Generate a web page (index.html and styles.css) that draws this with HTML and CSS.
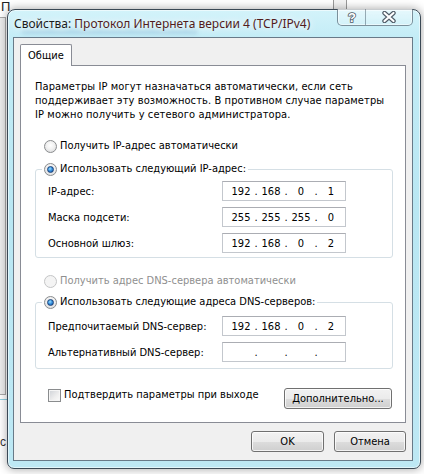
FILE: index.html
```html
<!DOCTYPE html>
<html lang="ru">
<head>
<meta charset="utf-8">
<title>Свойства: Протокол Интернета версии 4 (TCP/IPv4)</title>
<link rel="stylesheet" href="styles.css">
</head>
<body>
<div class="desktop">
  <!-- bits of the window lying underneath -->
  <span class="under-letter">П</span>
  <span class="under-scroll"></span>
  <span class="under-edge"></span>
  <span class="under-line"></span>
  <span class="under-letter2">с</span>

  <div class="dialog">
    <span class="glass-blur"></span>
    <div class="titlebar">
      <span class="title"><span class="title-a">Свойства:</span> <span class="title-b">Протокол Интернета версии 4 (TCP/IPv4)</span></span>
      <div class="caption">
        <span class="cap-btn cap-help">
          <svg width="14" height="14" viewBox="0 0 14 14"><text x="7" y="12" text-anchor="middle" class="cap-q">?</text></svg>
        </span>
        <span class="cap-btn cap-close">
          <svg width="14" height="12" viewBox="0 0 14 12">
            <path d="M2.5 2 L11.5 10 M11.5 2 L2.5 10" class="x-out"/>
            <path d="M2.5 2 L11.5 10 M11.5 2 L2.5 10" class="x-in"/>
          </svg>
        </span>
      </div>
    </div>

    <div class="client">
      <div class="tabs"><div class="tab">Общие</div></div>
      <div class="page">
        <p class="intro">Параметры IP могут назначаться автоматически, если сеть<br>поддерживает эту возможность. В противном случае параметры<br>IP можно получить у сетевого администратора.</p>

        <div class="radio r-ip-auto"><span class="rb"></span><span>Получить IP-адрес автоматически</span></div>

        <fieldset class="group g-ip">
          <legend><span class="radio on"><span class="rb"></span><span>Использовать следующий IP-адрес:</span></span></legend>
          <div class="rows">
            <span class="lbl">IP-адрес:</span>
            <div class="ipfield"><span class="oct">192</span><span class="dot">.</span><span class="oct">168</span><span class="dot">.</span><span class="oct">0</span><span class="dot">.</span><span class="oct">1</span></div>
            <span class="lbl">Маска подсети:</span>
            <div class="ipfield"><span class="oct">255</span><span class="dot">.</span><span class="oct">255</span><span class="dot">.</span><span class="oct">255</span><span class="dot">.</span><span class="oct">0</span></div>
            <span class="lbl">Основной шлюз:</span>
            <div class="ipfield"><span class="oct">192</span><span class="dot">.</span><span class="oct">168</span><span class="dot">.</span><span class="oct">0</span><span class="dot">.</span><span class="oct">2</span></div>
          </div>
        </fieldset>

        <div class="radio off r-dns-auto"><span class="rb"></span><span>Получить адрес DNS-сервера автоматически</span></div>

        <fieldset class="group g-dns">
          <legend><span class="radio on"><span class="rb"></span><span>Использовать следующие адреса DNS-серверов:</span></span></legend>
          <div class="rows">
            <span class="lbl">Предпочитаемый DNS-сервер:</span>
            <div class="ipfield"><span class="oct">192</span><span class="dot">.</span><span class="oct">168</span><span class="dot">.</span><span class="oct">0</span><span class="dot">.</span><span class="oct">2</span></div>
            <span class="lbl">Альтернативный DNS-сервер:</span>
            <div class="ipfield"><span class="oct"></span><span class="dot">.</span><span class="oct"></span><span class="dot">.</span><span class="oct"></span><span class="dot">.</span><span class="oct"></span></div>
          </div>
        </fieldset>

        <div class="page-bottom">
          <div class="check"><span class="cbox"></span><span>Подтвердить параметры при выходе</span></div>
          <button class="btn btn-adv">Дополнительно...</button>
        </div>
      </div>

      <div class="footer">
        <button class="btn btn-ok">OK</button>
        <button class="btn btn-cancel">Отмена</button>
      </div>
    </div>
  </div>
</div>
</body>
</html>
```
FILE: styles.css
```css
html, body {
  margin: 0;
  padding: 0;
}

body {
  width: 424px;
  height: 474px;
  overflow: hidden;
  background: #ffffff;
  font-family: "DejaVu Sans Condensed", "DejaVu Sans", sans-serif;
  font-size: 11px;
  color: #000;
}

.desktop {
  position: relative;
  width: 424px;
  height: 474px;
}

/* ---- window underneath ---- */
.under-letter {
  position: absolute;
  left: 1px;
  top: -1px;
  font-family: "Liberation Sans", sans-serif;
  font-size: 13px;
  color: #222;
}
.under-letter2 {
  position: absolute;
  left: 0;
  top: 435px;
  font-family: "Liberation Sans", sans-serif;
  font-size: 12px;
  color: #333;
}
.under-scroll {
  position: absolute;
  left: 333px;
  top: 0;
  width: 12px;
  height: 10px;
  border-left: 1px solid #9a9a9a;
  border-right: 1px solid #9a9a9a;
  background: #f4f4f4;
}
.under-edge {
  position: absolute;
  left: 0;
  top: 17px;
  width: 5px;
  height: 376px;
  border: 1px solid #a9a9a9;
  border-left: none;
  background: #ededed;
}
.under-line {
  position: absolute;
  left: 0;
  top: 399px;
  width: 8px;
  height: 1px;
  background: #8fd0e2;
}

/* ---- dialog frame ---- */
.dialog {
  position: absolute;
  left: 7px;
  top: 9px;
  width: 414px;
  height: 460px;
  box-sizing: border-box;
  border: 1px solid #3b4955;
  border-radius: 8px 8px 7px 7px;
  background: linear-gradient(to bottom, #d3f3fa 0px, #c2ecf6 30px, #b9e7f3 200px, #bde8f4 100%);
  box-shadow: 0 0 8px 1px rgba(0, 0, 0, 0.3), inset 0 0 0 1px rgba(255, 255, 255, 0.55);
  padding: 0 7px 7px 5px;
  display: flex;
  flex-direction: column;
}

.glass-blur {
  position: absolute;
  left: 14px;
  top: 20px;
  width: 175px;
  height: 4px;
  background: rgba(70, 120, 175, 0.22);
  filter: blur(2px);
}

.titlebar {
  height: 27px;
  display: flex;
  align-items: flex-start;
  position: relative;
}

.title {
  flex: 1;
  line-height: 27px;
  padding-left: 1px;
  font-family: "Noto Sans", sans-serif;
  font-size: 12px;
  white-space: nowrap;
  text-shadow: 0 0 6px rgba(255, 255, 255, 0.95), 0 0 10px rgba(255, 255, 255, 0.8);
}
.title-a { color: #1c1c1c; }
.title-b { color: #521c1c; }

.caption {
  display: flex;
  margin-top: -1px;
  height: 17px;
  border: 1px solid rgba(55, 75, 90, 0.6);
  border-top: none;
  border-radius: 0 0 5px 5px;
  box-sizing: border-box;
  background: linear-gradient(to bottom, rgba(255, 255, 255, 0.45), rgba(255, 255, 255, 0.15));
  box-shadow: inset 0 0 0 1px rgba(255, 255, 255, 0.5);
  overflow: hidden;
}
.cap-btn {
  display: flex;
  align-items: center;
  justify-content: center;
  height: 16px;
}
.cap-help {
  width: 27px;
  border-right: 1px solid rgba(55, 75, 90, 0.45);
}
.cap-close {
  width: 46px;
}
.cap-q {
  font-family: "Liberation Sans", sans-serif;
  font-weight: bold;
  font-size: 13px;
  fill: #ffffff;
  stroke: #4f5b66;
  stroke-width: 1.6px;
  paint-order: stroke fill;
}
.x-out {
  stroke: #4f5b66;
  stroke-width: 4.4;
  stroke-linecap: round;
  fill: none;
}
.x-in {
  stroke: #ffffff;
  stroke-width: 2.2;
  stroke-linecap: round;
  fill: none;
}

/* ---- client area ---- */
.client {
  flex: 1;
  display: flex;
  flex-direction: column;
  border: 1px solid #687a88;
  background: #f0f0f0;
  padding: 6px 6px 8px 6px;
  min-height: 0;
}

.tabs {
  display: flex;
  position: relative;
  z-index: 1;
  margin-bottom: -1px;
}
.tab {
  width: 52px;
  height: 22px;
  box-sizing: border-box;
  border: 1px solid #898c95;
  border-bottom: none;
  border-radius: 2px 2px 0 0;
  background: #ffffff;
  line-height: 21px;
  padding-left: 7px;
}

.page {
  flex: 1;
  display: flex;
  flex-direction: column;
  border: 1px solid #898c95;
  background: #ffffff;
  padding: 14px 12px 13px 14px;
}

.intro {
  margin: 0;
  line-height: 14px;
  white-space: nowrap;
  letter-spacing: 0.1px;
}

/* radio buttons */
.radio {
  display: flex;
  align-items: center;
  height: 14px;
  line-height: 14px;
  gap: 3px;
  white-space: nowrap;
}
.r-ip-auto { margin: 17px 0 0 9px; }
.r-dns-auto { margin: 16px 0 0 9px; }

.rb {
  position: relative;
  flex: none;
  width: 13px;
  height: 13px;
  box-sizing: border-box;
  border-radius: 50%;
  border: 1px solid #8a8c8e;
  background: radial-gradient(circle at 50% 40%, #ffffff 0%, #f1f1f1 45%, #d2d3d5 100%);
}
.radio.on .rb::after {
  content: "";
  position: absolute;
  left: 2px;
  top: 2px;
  width: 7px;
  height: 7px;
  box-sizing: border-box;
  border-radius: 50%;
  border: 1px solid #1b4279;
  background: radial-gradient(circle at 40% 35%, #9be0ff 0%, #3a93e0 45%, #0f4c9c 100%);
}
.radio.off { color: #8f8f8f; }
.radio.off .rb {
  border-color: #c4c5c6;
  background: #f4f4f4;
}

/* group boxes */
.group {
  margin: 9px 0 0 0;
  padding: 0;
  border: 1px solid #d5dfe5;
  border-radius: 3px;
  min-width: 0;
}
.g-dns { margin-top: 7px; }
.group legend {
  margin-left: 6px;
  padding: 0 2px;
}
.rows {
  display: grid;
  grid-template-columns: 174px 124px;
  row-gap: 6px;
  align-items: center;
  padding: 5px 0 4px 12px;
}
.g-dns .rows { padding: 7px 0 6px 12px; }

.lbl {
  white-space: nowrap;
}

.ipfield {
  display: flex;
  align-items: center;
  height: 20px;
  box-sizing: border-box;
  border: 1px solid #c3c7cd;
  border-top-color: #abadb3;
  background: #ffffff;
  padding-left: 6px;
}
.oct {
  width: 24px;
  text-align: center;
}
.dot {
  width: 6px;
  text-align: center;
}

/* bottom of the page */
.page-bottom {
  margin: auto 1px 0 13px;
  display: flex;
  align-items: flex-start;
  justify-content: space-between;
}
.check {
  display: flex;
  align-items: center;
  gap: 3px;
  height: 14px;
  line-height: 14px;
}
.cbox {
  flex: none;
  width: 13px;
  height: 13px;
  box-sizing: border-box;
  border: 1px solid #8a8c8e;
  background: linear-gradient(135deg, #cdd1d6 0%, #eeeeee 60%, #fbfbfb 100%);
  box-shadow: inset 0 0 0 1px #f5f5f5;
}

/* push buttons */
.btn {
  height: 21px;
  box-sizing: border-box;
  border: 1px solid #707070;
  border-radius: 3px;
  background: linear-gradient(to bottom, #f2f2f2 0%, #ebebeb 50%, #dddddd 51%, #cfcfcf 100%);
  box-shadow: inset 0 0 0 1px rgba(255, 255, 255, 0.75);
  font-family: inherit;
  font-size: 11px;
  color: #000;
  padding: 0;
  line-height: 18px;
}
.btn-adv { width: 108px; }

.footer {
  margin-top: 8px;
  display: flex;
  justify-content: flex-end;
  gap: 10px;
}
.btn-ok { width: 73px; }
.btn-cancel { width: 72px; }
```
